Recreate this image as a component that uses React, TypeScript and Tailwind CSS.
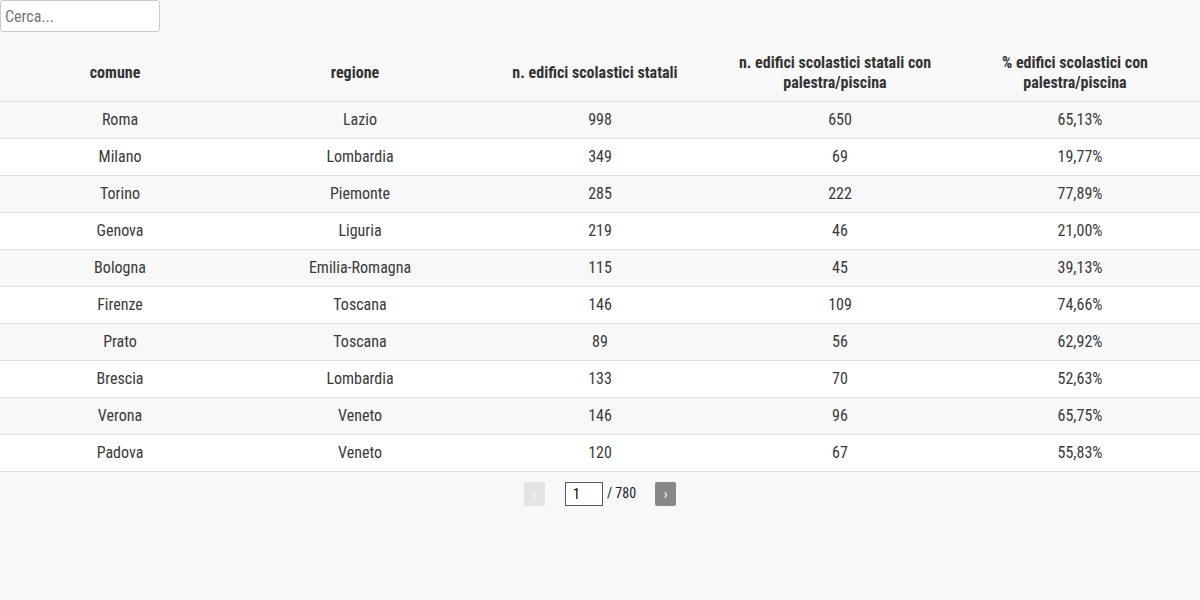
import { useState } from "react";

const rows = [
  ["Roma", "Lazio", "998", "650", "65,13%"],
  ["Milano", "Lombardia", "349", "69", "19,77%"],
  ["Torino", "Piemonte", "285", "222", "77,89%"],
  ["Genova", "Liguria", "219", "46", "21,00%"],
  ["Bologna", "Emilia-Romagna", "115", "45", "39,13%"],
  ["Firenze", "Toscana", "146", "109", "74,66%"],
  ["Prato", "Toscana", "89", "56", "62,92%"],
  ["Brescia", "Lombardia", "133", "70", "52,63%"],
  ["Verona", "Veneto", "146", "96", "65,75%"],
  ["Padova", "Veneto", "120", "67", "55,83%"],
];

const headers = [
  "comune",
  "regione",
  "n. edifici scolastici statali",
  "n. edifici scolastici statali con palestra/piscina",
  "% edifici scolastici con palestra/piscina",
];

export default function App() {
  const [query, setQuery] = useState("");
  const [page, setPage] = useState("1");

  return (
    <div className="min-h-[600px] bg-[#f8f8f8] text-[#333] font-['Roboto_Condensed',Roboto,sans-serif] [font-stretch:condensed]">
      {/* Search */}
      <input
        type="text"
        placeholder="Cerca..."
        value={query}
        onChange={(e) => setQuery(e.target.value)}
        className="block w-[160px] h-[32px] rounded-[3px] border border-[#ccc] bg-white px-[4px] text-[16px] text-[#333] placeholder:text-[#777] outline-none"
      />

      {/* Table */}
      <table className="mt-[8px] w-full border-collapse table-fixed">
        <thead>
          <tr className="h-[61px] border-b border-[#ddd]">
            {headers.map((h) => (
              <th
                key={h}
                className="pl-[10px] pr-[20px] pt-[6px] text-center align-middle text-[16px] font-bold leading-[20px] text-[#333]"
              >
                {h}
              </th>
            ))}
          </tr>
        </thead>
        <tbody>
          {rows.map((r, i) => (
            <tr
              key={r[0]}
              className={`h-[37px] border-b border-[#ddd] ${i % 2 == 0 ? "bg-[#f8f8f8]" : "bg-white"}`}
            >
              {r.map((c, j) => (
                <td key={j} className="text-center align-middle text-[16px] text-[#3a3a3a]">
                  {c}
                </td>
              ))}
            </tr>
          ))}
        </tbody>
      </table>

      {/* Pagination */}
      <div className="flex items-center justify-center mt-[10px] text-[14px]">
        <button className="w-[21px] h-[24px] rounded-[2px] bg-[#e4e4e4] text-[#fff] text-[14px] leading-none">
          ‹
        </button>
        <input
          value={page}
          onChange={(e) => setPage(e.target.value)}
          className="ml-[20px] w-[38px] h-[24px] border border-[#555] bg-white px-[7px] text-[14px] text-black outline-none"
        />
        <span className="ml-[4px] text-[#222]">/ 780</span>
        <button className="ml-[19px] w-[21px] h-[24px] rounded-[2px] bg-[#888] text-white text-[14px] leading-none">
          ›
        </button>
      </div>
    </div>
  );
}
